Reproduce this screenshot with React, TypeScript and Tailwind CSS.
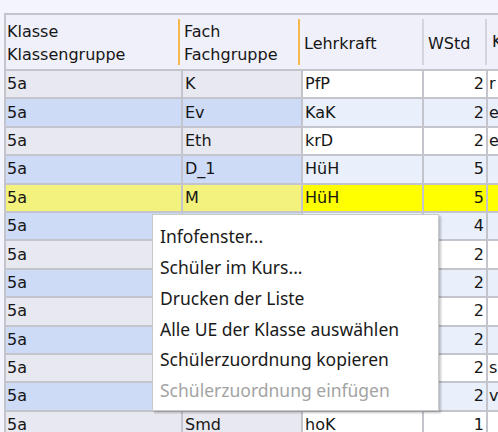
import React from "react";

type Row = { klasse: string; fach: string; lehrer: string; wstd: string; k: string };

const rows: Row[] = [
  { klasse: "5a", fach: "K", lehrer: "PfP", wstd: "2", k: "r" },
  { klasse: "5a", fach: "Ev", lehrer: "KaK", wstd: "2", k: "e" },
  { klasse: "5a", fach: "Eth", lehrer: "krD", wstd: "2", k: "e" },
  { klasse: "5a", fach: "D_1", lehrer: "HüH", wstd: "5", k: "" },
  { klasse: "5a", fach: "M", lehrer: "HüH", wstd: "5", k: "" },
  { klasse: "5a", fach: "", lehrer: "", wstd: "4", k: "" },
  { klasse: "5a", fach: "", lehrer: "", wstd: "2", k: "" },
  { klasse: "5a", fach: "", lehrer: "", wstd: "2", k: "" },
  { klasse: "5a", fach: "", lehrer: "", wstd: "2", k: "" },
  { klasse: "5a", fach: "", lehrer: "", wstd: "2", k: "" },
  { klasse: "5a", fach: "", lehrer: "", wstd: "2", k: "s" },
  { klasse: "5a", fach: "", lehrer: "", wstd: "2", k: "v" },
  { klasse: "5a", fach: "Smd", lehrer: "hoK", wstd: "1", k: "" },
];

const SELECTED = 4;

const menuItems = [
  { label: "Infofenster...", disabled: false },
  { label: "Schüler im Kurs...", disabled: false },
  { label: "Drucken der Liste", disabled: false },
  { label: "Alle UE der Klasse auswählen", disabled: false },
  { label: "Schülerzuordnung kopieren", disabled: false },
  { label: "Schülerzuordnung einfügen", disabled: true },
];

function HeaderCell({ width, lines, accent }: { width: string; lines: string[]; accent: boolean }) {
  return (
    <div className={`${width} flex items-center shrink-0`}>
      <div className="flex-1 flex flex-col justify-center pl-[1px] pt-[2px] leading-[23px] whitespace-nowrap overflow-hidden">
        {lines.map((l) => (
          <span key={l}>{l}</span>
        ))}
      </div>
      <div className={`w-[2px] h-[46px] shrink-0 ${accent ? "bg-[#f7b94c]" : "bg-[#d4d4dc]"}`} />
      <div className="w-[3px] shrink-0" />
    </div>
  );
}

export default function App() {
  return (
    <div className="relative w-[498px] h-[432px] overflow-hidden bg-[#f4f4fc] pt-[13px] pl-[4px] text-[#161616] font-['DejaVu_Sans',sans-serif] text-[16px]">
      <div className="border-l-2 border-t-2 border-[#c4c4cc] w-[600px]">
        {/* header */}
        <div className="flex h-[56px] bg-[#f0f0fa] border-b-2 border-[#c4c4cc]">
          <HeaderCell width="w-[177px]" lines={["Klasse", "Klassengruppe"]} accent />
          <HeaderCell width="w-[120px]" lines={["Fach", "Fachgruppe"]} accent />
          <HeaderCell width="w-[124px]" lines={["Lehrkraft"]} accent={false} />
          <HeaderCell width="w-[63px]" lines={["WStd"]} accent={false} />
          <div className="flex items-center pl-[2px]">K</div>
        </div>

        {/* rows */}
        {rows.map((r, i) => {
          const sel = i === SELECTED;
          const odd = i % 2 === 1;
          const left = sel ? "bg-[#f2f27c]" : odd ? "bg-[#cddbf6]" : "bg-[#e8e8f0]";
          const right = sel ? "bg-[#ffff00]" : odd ? "bg-[#e9f0fc]" : "bg-white";
          return (
            <div key={i} className="flex h-[28.4px] border-b-2 border-[#c4c4cc]">
              <div className={`w-[177px] shrink-0 ${left} border-r-2 border-[#c4c4cc] flex items-center pl-[1px]`}>
                {r.klasse}
              </div>
              <div className={`w-[120px] shrink-0 ${left} border-r-2 border-[#c4c4cc] flex items-center pl-[2px]`}>
                {r.fach}
              </div>
              <div className={`w-[121px] shrink-0 ${right} border-r-2 border-[#c4c4cc] flex items-center pl-[2px]`}>
                {r.lehrer}
              </div>
              <div className={`w-[64px] shrink-0 ${right} border-r-2 border-[#c4c4cc] flex items-center justify-end pr-[2px]`}>
                {r.wstd}
              </div>
              <div className={`flex-1 ${right} flex items-center pl-[1px]`}>{r.k}</div>
            </div>
          );
        })}
      </div>

      {/* context menu */}
      <div className="absolute left-[152px] top-[214px] w-[287px] h-[197px] bg-white border border-[#c8c8c8] shadow-[2px_2px_2px_rgba(0,0,0,0.22)] py-[6px] font-['Noto_Sans',sans-serif] text-[17.5px]">
        {menuItems.map((m) => (
          <div
            key={m.label}
            className={`h-[30.8px] flex items-center pl-[7px] whitespace-nowrap ${m.disabled ? "text-[#a3a3a3]" : "text-[#1a1a1a]"}`}
          >
            {m.label}
          </div>
        ))}
      </div>
    </div>
  );
}
